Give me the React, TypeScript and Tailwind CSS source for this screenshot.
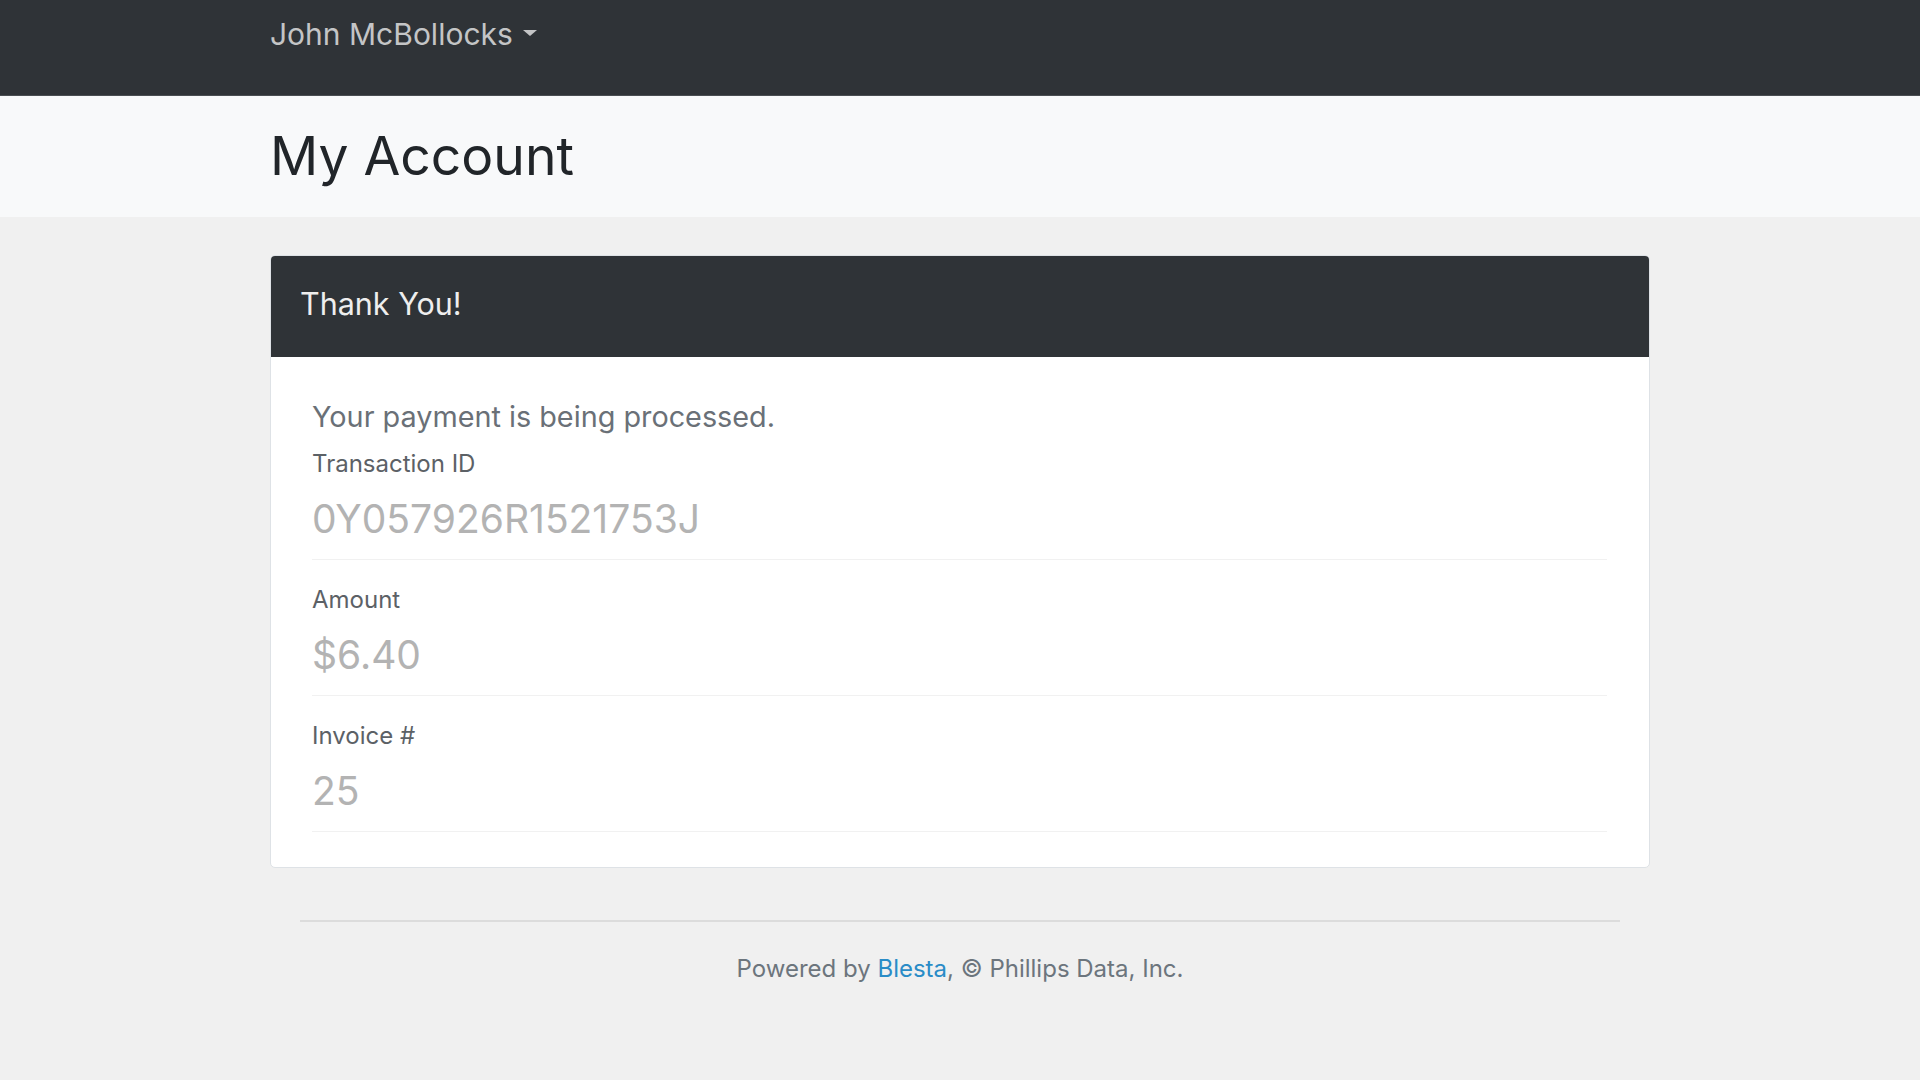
import React from "react";

const font = { fontFamily: "Inter, 'Noto Sans', sans-serif" };

function Field({ label, value, first }: { label: string; value: string; first?: boolean }) {
  return (
    <div className={first ? "mt-[16px] border-b border-[#f1f1f1] pb-[17px]" : "mt-[26px] border-b border-[#f1f1f1] pb-[17px]"}>
      <div className="text-[24px] leading-[28px] text-[#5c6166]">{label}</div>
      <div className="mt-[18px] text-[39px] leading-[46px] text-[#b3b3b3]">{value}</div>
    </div>
  );
}

export default function App() {
  return (
    <div className="min-h-screen bg-[#f0f0f0]" style={font}>
      <nav className="h-[96px] bg-[#2f3337] border-b border-[#4a4e52]">
        <div className="pl-[270px] pt-[16px] flex items-start">
          <span className="text-[30px] leading-[36px] text-[#c4c5c6]">John McBollocks</span>
          <span className="ml-[10px] mt-[14px] w-0 h-0 border-l-[7px] border-r-[7px] border-t-[6px] border-l-transparent border-r-transparent border-t-[#c4c5c6]" />
        </div>
      </nav>
      <header className="bg-[#f8f9fa] h-[121px] pl-[270px] pt-[28px]">
        <h1 className="text-[53.4px] leading-[64px] text-[#212529] font-normal">My Account</h1>
      </header>
      <main className="px-[270px] pt-[38px]">
        <div className="rounded-[5px] border border-[#dee2e6] bg-white overflow-hidden">
          <div className="h-[101px] bg-[#2f3337] pl-[29px] pt-[29px]">
            <h4 className="text-[30.5px] leading-[38px] text-[#eeeeee]">Thank You!</h4>
          </div>
          <div className="pl-[41px] pr-[42px] pt-[42px] pb-[35px]">
            <p className="text-[28.8px] leading-[35px] text-[#6a7077]">Your payment is being processed.</p>
            <Field first label="Transaction ID" value="0Y057926R1521753J" />
            <Field label="Amount" value="$6.40" />
            <Field label="Invoice #" value="25" />
          </div>
        </div>
        <div className="mx-[30px] mt-[52px] h-[2px] bg-[#dcdcdc]" />
        <footer className="pt-[33px] pb-[60px] text-center text-[24px] leading-[28px] text-[#6c757d]">
          Powered by <a className="text-[#2a8cc7]">Blesta</a>, © Phillips Data, Inc.
        </footer>
      </main>
    </div>
  );
}
